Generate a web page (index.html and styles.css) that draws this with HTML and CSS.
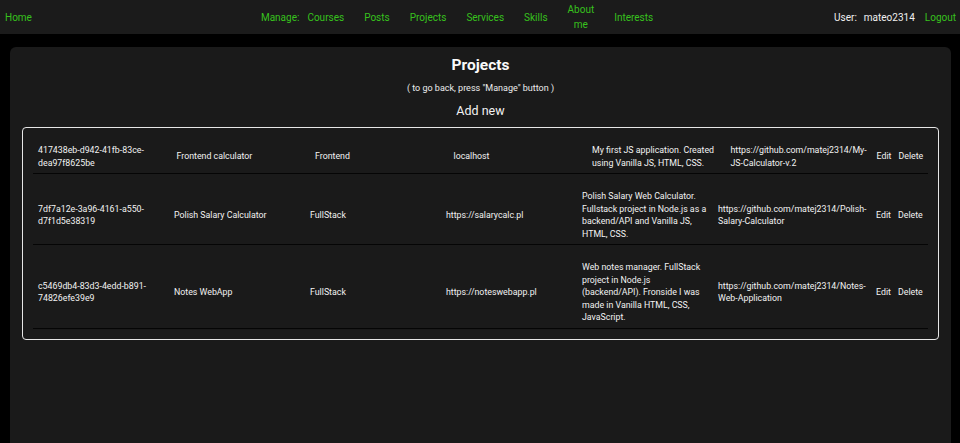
FILE: index.html
```html
<!DOCTYPE html>
<html lang="en">
<head>
<meta charset="utf-8">
<title>Projects</title>
<link rel="stylesheet" href="styles.css">
</head>
<body>
<nav class="nav">
  <a class="link" href="#">Home</a>
  <div class="manage">
    <span class="label">Manage:</span>
    <a class="link" href="#">Courses</a>
    <a class="link" href="#">Posts</a>
    <a class="link" href="#">Projects</a>
    <a class="link" href="#">Services</a>
    <a class="link" href="#">Skills</a>
    <a class="link narrow" href="#">About me</a>
    <a class="link" href="#">Interests</a>
  </div>
  <div class="user">
    <span class="plain">User:</span>
    <span class="plain">mateo2314</span>
    <a class="link" href="#">Logout</a>
  </div>
</nav>
<main class="panel">
  <h1 class="title">Projects</h1>
  <p class="hint">( to go back, press "Manage" button )</p>
  <h2 class="add">Add new</h2>
  <div class="box">
    <div class="row row-a">
      <div class="cell">417438eb-d942-41fb-83ce-dea97f8625be</div>
      <div class="cell">Frontend calculator</div>
      <div class="cell">Frontend</div>
      <div class="cell">localhost</div>
      <div class="cell">My first JS application. Created using Vanilla JS, HTML, CSS.</div>
      <div class="cell">https://github.com/matej2314/My-JS-Calculator-v.2</div>
      <div class="cell nw">Edit</div>
      <div class="cell nw">Delete</div>
    </div>
    <div class="row row-b">
      <div class="cell">7df7a12e-3a96-4161-a550-d7f1d5e38319</div>
      <div class="cell">Polish Salary Calculator</div>
      <div class="cell">FullStack</div>
      <div class="cell">https://salarycalc.pl</div>
      <div class="cell">Polish Salary Web Calculator. Fullstack project in Node.js as a backend/API and Vanilla JS, HTML, CSS.</div>
      <div class="cell">https://github.com/matej2314/Polish-Salary-Calculator</div>
      <div class="cell nw">Edit</div>
      <div class="cell nw">Delete</div>
    </div>
    <div class="row row-b">
      <div class="cell">c5469db4-83d3-4edd-b891-74826efe39e9</div>
      <div class="cell">Notes WebApp</div>
      <div class="cell">FullStack</div>
      <div class="cell">https://noteswebapp.pl</div>
      <div class="cell">Web notes manager. FullStack project in Node.js (backend/API). Fronside I was made in Vanilla HTML, CSS, JavaScript.</div>
      <div class="cell">https://github.com/matej2314/Notes-Web-Application</div>
      <div class="cell nw">Edit</div>
      <div class="cell nw">Delete</div>
    </div>
  </div>
</main>
</body>
</html>
```

FILE: styles.css
```css
* { box-sizing: border-box; }
html, body {
  margin: 0;
  padding: 0;
  background: #000;
  font-family: Roboto, "Liberation Sans", sans-serif;
  color: #ececec;
  height: 100%;
  overflow: hidden;
}
.nav {
  height: 34px;
  background: #1b1b1b;
  display: flex;
  align-items: center;
  padding: 0 4px 0 5px;
  font-size: 10px;
  line-height: 15px;
}
.link {
  color: #37c11d;
  text-decoration: none;
}
.manage {
  display: flex;
  align-items: center;
  gap: 20px;
  margin-left: 229px;
}
.manage .label {
  color: #37c11d;
  margin-right: -12px;
}
.narrow {
  width: min-content;
  text-align: center;
}
.user {
  margin-left: auto;
  display: flex;
  align-items: center;
  gap: 7px;
}
.plain { color: #f0f0f0; }
.user .link { margin-left: 3px; }

.panel {
  margin: 13px 9px 0 10px;
  background: #1a1a1a;
  border-radius: 6px;
  min-height: 420px;
  padding: 9px 12px 20px;
}
.title {
  margin: 0;
  text-align: center;
  font-size: 15.5px;
  line-height: 18px;
  font-weight: 700;
  color: #fafafa;
}
.hint {
  margin: 9px 0 0;
  text-align: center;
  font-size: 9px;
  line-height: 11px;
  color: #ececec;
}
.add {
  margin: 9px 0 0;
  text-align: center;
  font-size: 12.5px;
  line-height: 16px;
  font-weight: 400;
  color: #f2f2f2;
}
.box {
  margin-top: 8px;
  border: 1px solid #e6e6e6;
  border-radius: 4px;
  padding: 0 10px 10px;
}
.row {
  display: grid;
  align-items: center;
  border-bottom: 1px solid #050505;
  padding: 16px 0 4px;
  font-size: 8.8px;
  line-height: 12.5px;
  color: #f2f2f2;
}
.row-a { grid-template-columns: 138.5px 138.5px 138.5px 138.5px 138.5px 146px 22px 1fr; }
.row-b { grid-template-columns: 136px 136px 136px 136px 136px 158px 22px 1fr; }
.cell {
  padding: 0 5px;
}
.nw { white-space: nowrap; padding-right: 0; }
```
